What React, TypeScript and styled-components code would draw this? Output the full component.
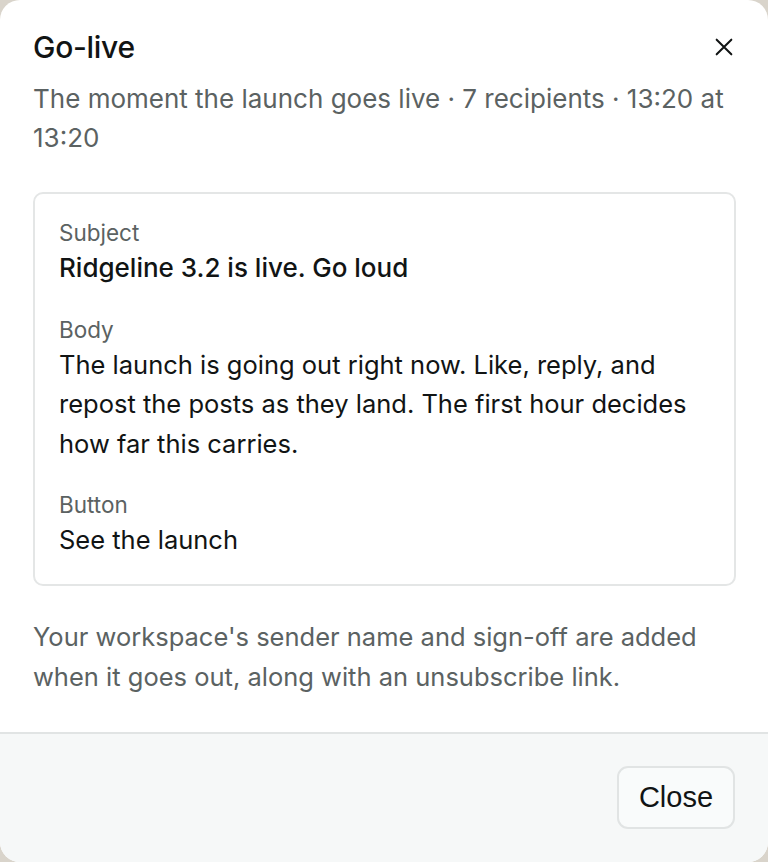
import React from 'react';
import styled, { createGlobalStyle } from 'styled-components';

const GlobalStyle = createGlobalStyle`
  html, body {
    margin: 0;
    padding: 0;
    background: #d9d4cb;
  }
  * {
    box-sizing: border-box;
  }
`;

const Dialog = styled.div`
  width: 768px;
  height: 862px;
  background: #ffffff;
  border-radius: 20px;
  overflow: hidden;
  display: flex;
  flex-direction: column;
  font-family: Inter, "Noto Sans", sans-serif;
`;

const Content = styled.div`
  flex: 1;
  padding: 28px 32px 0 33px;
`;

const Header = styled.div`
  display: flex;
  align-items: flex-start;
  justify-content: space-between;
`;

const Title = styled.h2`
  margin: 0;
  font-size: 30px;
  font-weight: 500;
  line-height: 38px;
  color: #111414;
  letter-spacing: -0.3px;
`;

const CloseIcon = styled.button`
  border: none;
  background: none;
  padding: 0;
  margin: 4px -3px 0 0;
  width: 30px;
  height: 30px;
  display: flex;
  align-items: center;
  justify-content: center;
  color: #111414;
  cursor: pointer;
`;

const Subtitle = styled.p`
  margin: 13px 0 0 0;
  font-size: 26px;
  line-height: 39px;
  color: #5b6262;
`;

const Card = styled.div`
  margin-top: 35px;
  border: 2px solid #e4e6e6;
  border-radius: 10px;
  padding: 24px 24px 24px 24px;
  display: flex;
  flex-direction: column;
  gap: 27px;
`;

const Field = styled.div`
  display: flex;
  flex-direction: column;
`;

const Label = styled.span`
  font-size: 22.5px;
  line-height: 30px;
  color: #5b6262;
`;

const Value = styled.span<{ $strong?: boolean }>`
  font-size: ${p => (p.$strong ? '26px' : '25.5px')};
  line-height: 39.5px;
  color: #111414;
  font-weight: ${p => (p.$strong ? 500 : 400)};
`;

const Note = styled.p`
  margin: 31px 0 0 0;
  font-size: 25.5px;
  line-height: 40px;
  color: #5b6262;
`;

const Footer = styled.div`
  border-top: 2px solid #e1e4e4;
  background: #f6f8f8;
  padding: 32px 33px 33px 33px;
  display: flex;
  justify-content: flex-end;
`;

const Button = styled.button`
  width: 118px;
  height: 63px;
  border: 2px solid #e1e4e4;
  border-radius: 11px;
  background: #f9fbfb;
  font-family: "Liberation Sans", Arial, sans-serif;
  font-size: 29px;
  color: #111414;
  cursor: pointer;
`;

export default function App() {
  return (
    <>
      <GlobalStyle />
      <Dialog>
        <Content>
          <Header>
            <Title>Go-live</Title>
            <CloseIcon aria-label="Close">
              <svg width="22" height="22" viewBox="0 0 24 24" fill="none" stroke="currentColor" strokeWidth="2.2" strokeLinecap="round">
                <path d="M4 4l16 16M20 4L4 20" />
              </svg>
            </CloseIcon>
          </Header>
          <Subtitle>The moment the launch goes live · 7 recipients · 13:20 at 13:20</Subtitle>
          <Card>
            <Field>
              <Label>Subject</Label>
              <Value $strong>Ridgeline 3.2 is live. Go loud</Value>
            </Field>
            <Field>
              <Label>Body</Label>
              <Value>
                The launch is going out right now. Like, reply, and repost the posts as they land. The first hour decides how far this carries.
              </Value>
            </Field>
            <Field>
              <Label>Button</Label>
              <Value>See the launch</Value>
            </Field>
          </Card>
          <Note>
            Your workspace's sender name and sign-off are added when it goes out, along with an unsubscribe link.
          </Note>
        </Content>
        <Footer>
          <Button>Close</Button>
        </Footer>
      </Dialog>
    </>
  );
}
